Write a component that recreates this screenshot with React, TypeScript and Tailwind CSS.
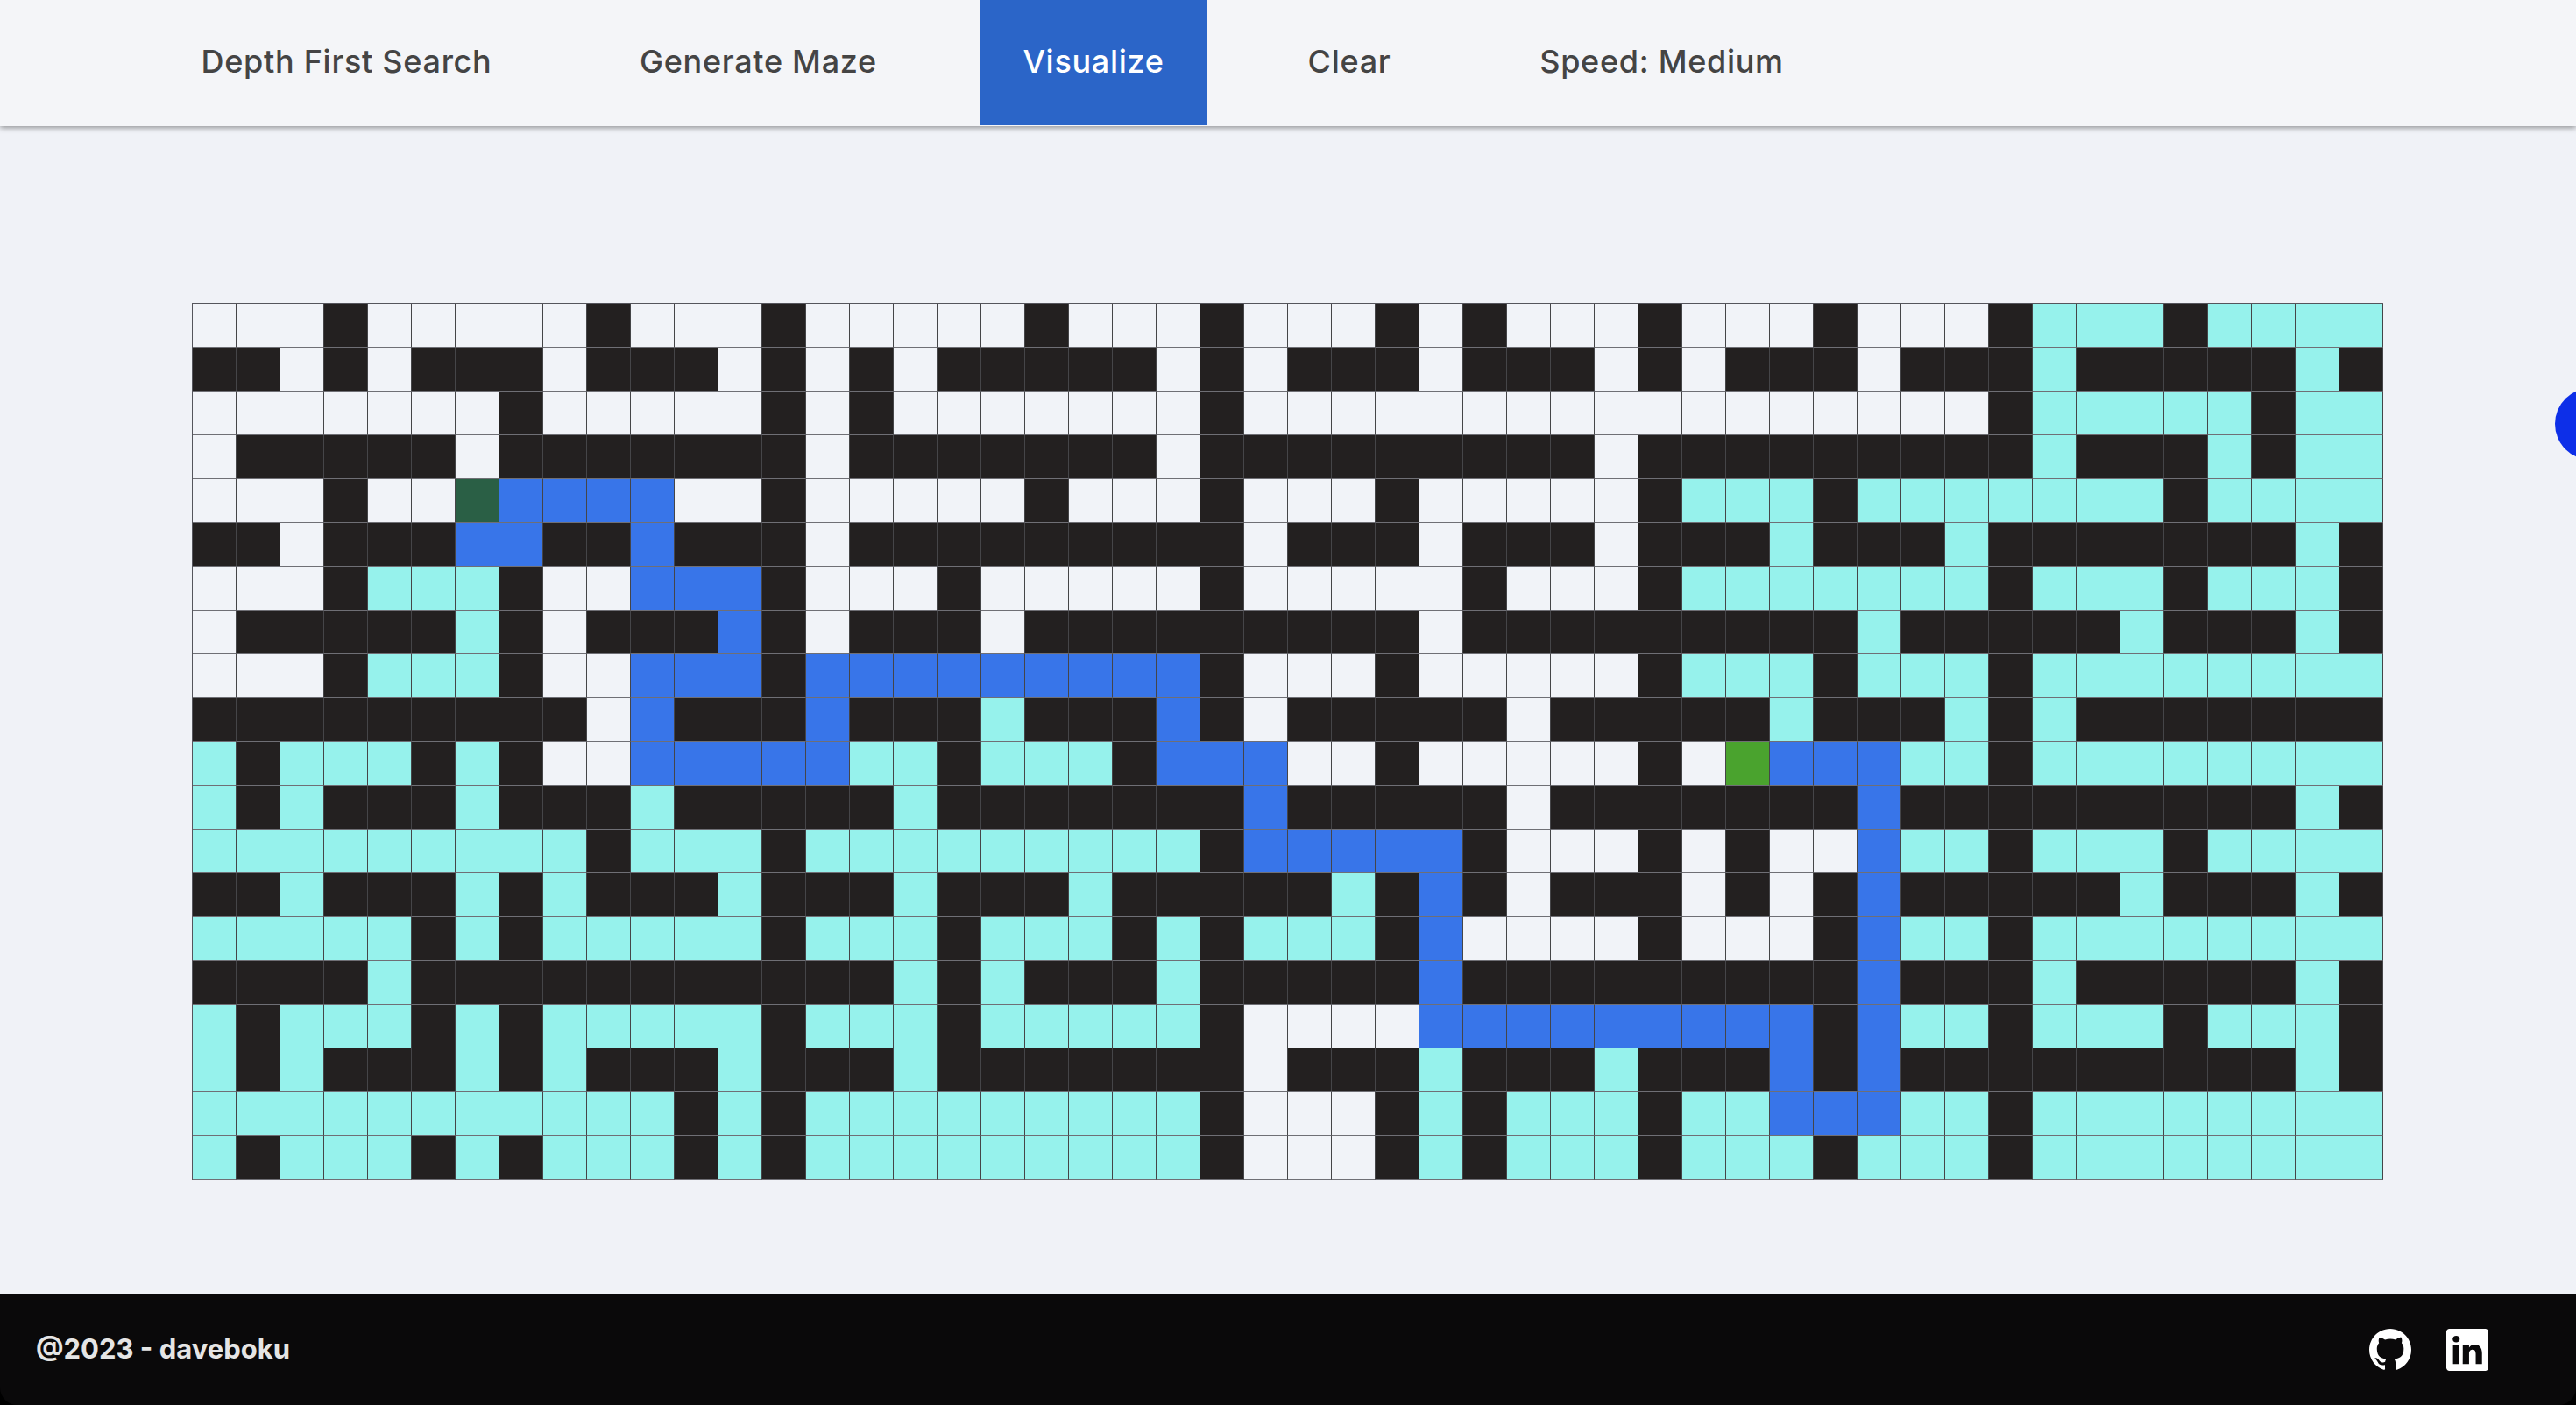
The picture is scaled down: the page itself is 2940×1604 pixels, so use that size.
import { BsGithub, BsLinkedin } from 'react-icons/bs';

// . empty, # wall, C visited, B path, S start, E end
const maze = [
  '...#.....#...#...' + '..#...#...#.#...#' + '...#...#CCC#CCCC',
  '##.#.###.###.#.#.' + '#####.#.###.###.#' + '.###.###C#####C#',
  '.......#.....#.#.' + '......#..........' + '.......#CCCCC#CC',
  '.#####.#######.##' + '#####.#########.#' + '########C###C#CC',
  '...#..SBBBB..#...' + '..#...#...#.....#' + 'CCC#CCCCCCC#CCCC',
  '##.###BB##B###.##' + '#######.###.###.#' + '##C###C#######C#',
  '...#CCC#..BBB#...' + '#.....#.....#...#' + 'CCCCCCC#CCC#CCC#',
  '.#####C#.###B#.##' + '#.#########.#####' + '####C#####C###C#',
  '...#CCC#..BBB#BBB' + 'BBBBBB#...#.....#' + 'CCC#CCC#CCCCCCCC',
  '#########.B###B##' + '#C###B#.#####.###' + '##C###C#C#######',
  'C#CCC#C#..BBBBBCC' + '#CCC#BBB..#.....#' + '.EBBBCC#CCCCCCCC',
  'C#C###C###C#####C' + '#######B#####.###' + '####B#########C#',
  'CCCCCCCCC#CCC#CCC' + 'CCCCCC#BBBBB#...#' + '.#..BCC#CCC#CCCC',
  '##C###C#C###C###C' + '###C#####C#B#.###' + '.#.#B#####C###C#',
  'CCCCC#C#CCCCC#CCC' + '#CCC#C#CCC#B....#' + '...#BCC#CCCCCCCC',
  '####C###########C' + '#C###C#####B#####' + '####B###C#####C#',
  'C#CCC#C#CCCCC#CCC' + '#CCCCC#....BBBBBB' + 'BBB#BCC#CCC#CCC#',
  'C#C###C#C###C###C' + '#######.###C###C#' + '##B#B#########C#',
  'CCCCCCCCCCC#C#CCC' + 'CCCCCC#...#C#CCC#' + 'CCBBBCC#CCCCCCCC',
  'C#CCC#C#CCC#C#CCC' + 'CCCCCC#...#C#CCC#' + 'CCC#CCC#CCCCCCCC',
];

function cellClass(c: string) {
  switch (c) {
    case '#': return 'bg-[#232020]';
    case 'C': return 'bg-[#96f2ec]';
    case 'B': return 'bg-[#3875e9]';
    case 'S': return 'bg-[#2a5f45]';
    case 'E': return 'bg-[#4aa32e]';
    default: return 'bg-[#f1f3f8]';
  }
}

function NavItem({ label, width, active }: { label: string; width: string; active?: boolean }) {
  return (
    <button
      className={
        'h-[143px] shrink-0 whitespace-nowrap pb-[3px] text-[36px] font-medium tracking-[0.7px] ' +
        width + ' ' +
        (active ? 'bg-[#2b65c8] text-white' : 'text-[#444444]')
      }
    >
      {label}
    </button>
  );
}

export default function App() {
  return (
    <div className="relative flex h-[1604px] w-[2940px] flex-col overflow-hidden bg-[#f0f2f7] font-['Inter',sans-serif]">
      <nav className="z-10 flex h-[144px] shrink-0 items-start gap-[66px] bg-[#f4f5f8] pl-[178px] shadow-[0_2px_6px_rgba(0,0,0,0.4)]">
        <NavItem label="Depth First Search" width="w-[435px]" />
        <NavItem label="Generate Maze" width="w-[373px]" />
        <NavItem label="Visualize" width="w-[260px]" active />
        <NavItem label="Clear" width="w-[192px]" />
        <NavItem label="Speed: Medium" width="w-[389px]" />
      </nav>

      <main className="flex flex-1 justify-center pr-[1px] pt-[202px]">
        <div className="h-fit border-l border-t border-[#55555c]">
          {maze.map((row, y) => (
            <div key={y} className="flex">
              {row.split('').map((c, x) => (
                <div
                  key={x}
                  className={'h-[50px] w-[50px] border-b border-r border-b-[#6f6f75] border-r-[#454548] ' + cellClass(c)}
                />
              ))}
            </div>
          ))}
        </div>
      </main>

      <div className="absolute right-[-58px] top-[443px] h-[82px] w-[82px] rounded-full bg-[#0d2fe8]" />

      <div className="h-[127px] shrink-0 bg-black">
        <footer className="flex h-full items-center justify-between rounded-b-[20px] bg-[#0a090a] pl-[41px] pr-[100px] text-[#e5e5e5]">
          <span className="text-[31px] font-bold">@2023 - daveboku</span>
          <div className="flex items-center gap-[40px] text-white">
            <BsGithub size={48} />
            <BsLinkedin size={48} />
          </div>
        </footer>
      </div>
    </div>
  );
}
